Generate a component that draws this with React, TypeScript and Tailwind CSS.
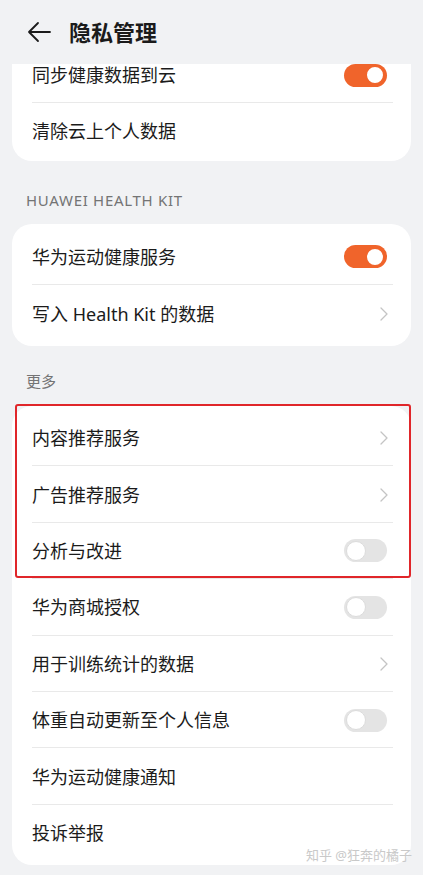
const font = { fontFamily: '"Noto Sans", "Noto Sans CJK SC", sans-serif' };

type Item = { label: string; kind: "on" | "off" | "chevron" | "none" };

const healthKit: Item[] = [
  { label: "华为运动健康服务", kind: "on" },
  { label: "写入 Health Kit 的数据", kind: "chevron" },
];

const more: Item[] = [
  { label: "内容推荐服务", kind: "chevron" },
  { label: "广告推荐服务", kind: "chevron" },
  { label: "分析与改进", kind: "off" },
  { label: "华为商城授权", kind: "off" },
  { label: "用于训练统计的数据", kind: "chevron" },
  { label: "体重自动更新至个人信息", kind: "off" },
  { label: "华为运动健康通知", kind: "none" },
  { label: "投诉举报", kind: "none" },
];

function Toggle({ on }: { on: boolean }) {
  return on ? (
    <div className="flex h-[23px] w-[43px] items-center justify-end rounded-full bg-[#f0642b] px-[2px]">
      <div className="h-[20px] w-[20px] rounded-full border-2 border-[#f0642b] bg-white" />
    </div>
  ) : (
    <div className="flex h-[23px] w-[43px] items-center rounded-full bg-[#e4e4e4] px-[2px]">
      <div className="h-[20px] w-[20px] rounded-full border border-[#dcdcdc] bg-white" />
    </div>
  );
}

function Chevron() {
  return (
    <svg width="10" height="16" viewBox="0 0 10 16" className="mr-[-2px]">
      <path d="M2 2 L8 8 L2 14" fill="none" stroke="#c4c4c4" strokeWidth="1.3" strokeLinecap="round" strokeLinejoin="round" />
    </svg>
  );
}

function Row({ item, last, h }: { item: Item; last?: boolean; h: string }) {
  return (
    <div className={`flex ${h} items-center justify-between pl-5 pr-6 ${last ? "" : "relative"}`}>
      <span className="text-[18px] leading-none text-[#1b1b1b]">{item.label}</span>
      {item.kind === "on" && <Toggle on />}
      {item.kind === "off" && <Toggle on={false} />}
      {item.kind === "chevron" && <Chevron />}
      {!last && <div className="absolute bottom-0 left-5 right-[18px] h-px bg-[#e9e9e9]" />}
    </div>
  );
}

export default function App() {
  return (
    <div className="relative min-h-[875px] w-[423px] bg-[#f1f2f4]" style={font}>
      <header className="flex h-16 items-center gap-[17px] pl-[26px]">
        <svg width="26" height="24" viewBox="0 0 26 24">
          <path d="M3 12 H24 M12 3 L3 12 L12 21" fill="none" stroke="#1b1b1b" strokeWidth="1.8" strokeLinecap="round" strokeLinejoin="round" />
        </svg>
        <h1 className="text-[22px] font-semibold text-[#1b1b1b]">隐私管理</h1>
      </header>

      <div className="mx-3 overflow-hidden rounded-b-[20px] bg-white pb-[2px]">
        <div className="flex h-[39px] flex-col justify-end overflow-hidden">
          <Row item={{ label: "同步健康数据到云", kind: "on" }} h="h-[56px] shrink-0" />
        </div>
        <Row item={{ label: "清除云上个人数据", kind: "none" }} h="h-[56px]" last />
      </div>

      <div className="px-[26px] pb-[14px] pt-[29px] text-[15px] leading-[20px] tracking-[0.7px] text-[#747474]">HUAWEI HEALTH KIT</div>

      <div className="mx-3 rounded-[20px] bg-white py-1">
        {healthKit.map((it, i) => (
          <Row key={it.label} item={it} h="h-[57px]" last={i === healthKit.length - 1} />
        ))}
      </div>

      <div className="px-[26px] pb-[15px] pt-[25px] text-[15px] leading-[20px] text-[#747474]">更多</div>

      <div className="relative mx-3 rounded-[20px] bg-white py-1">
        {more.map((it, i) => (
          <Row key={it.label} item={it} h="h-[56.4px]" last={i === more.length - 1} />
        ))}
        <div className="absolute left-[3px] top-[-2px] h-[174px] w-[396px] rounded-[3px] border-2 border-[#e0262a]" />
      </div>

      <div className="absolute bottom-[10px] right-[11px] text-[13px] text-[#c9c9c9]">知乎 @狂奔的橘子</div>
    </div>
  );
}
